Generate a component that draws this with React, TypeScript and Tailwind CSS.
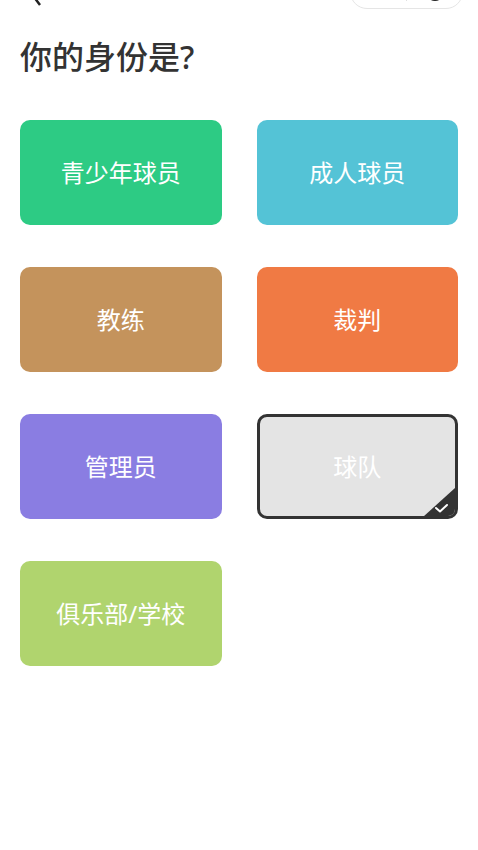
import React from "react";

type Role = { name: string; color: string; selected?: boolean };

const roles: Role[] = [
  { name: "青少年球员", color: "bg-[#2dcb84]" },
  { name: "成人球员", color: "bg-[#54c3d6]" },
  { name: "教练", color: "bg-[#c4935c]" },
  { name: "裁判", color: "bg-[#f07a44]" },
  { name: "管理员", color: "bg-[#8a7de2]" },
  { name: "球队", color: "bg-[#e4e4e4]", selected: true },
  { name: "俱乐部/学校", color: "bg-[#b0d46e]" },
];

function RoleCard({ role }: { role: Role }) {
  return (
    <div
      className={`relative h-[105px] rounded-[10px] overflow-hidden flex items-center justify-center ${role.color} ${
        role.selected ? "border-[3px] border-[#333333]" : ""
      }`}
    >
      <span className="text-white text-[24px]">{role.name}</span>
      {role.selected && (
        <svg className="absolute -right-px -bottom-px" width="33" height="30" viewBox="0 0 33 30">
          <polygon points="33,0 33,30 0,30" fill="#333333" />
          <path d="M13 21 L17 24.5 L24 18" stroke="#ffffff" strokeWidth="2" fill="none" strokeLinecap="round" strokeLinejoin="round" />
        </svg>
      )}
    </div>
  );
}

export default function App() {
  return (
    <div
      className="w-full min-h-[850px] bg-white px-5 overflow-hidden"
      style={{ fontFamily: '"Noto Sans", "Noto Sans CJK SC", sans-serif' }}
    >
      {/* 顶部导航 (被截掉的部分) */}
      <div className="flex items-end justify-between h-[34px] -mt-[25px]">
        <svg width="20" height="34" viewBox="0 0 20 34" className="ml-[6px]">
          <path d="M14 14 L8 22 L14 30" stroke="#222" strokeWidth="2.5" fill="none" />
        </svg>
        <div className="flex items-center h-[34px] w-[113px] rounded-full border border-[#e5e5e5] bg-white -mr-[5px]">
          <div className="flex-1 flex justify-center gap-[3px]">
            <span className="w-[5px] h-[5px] rounded-full bg-[#222]" />
            <span className="w-[7px] h-[7px] rounded-full bg-[#222]" />
            <span className="w-[5px] h-[5px] rounded-full bg-[#222]" />
          </div>
          <div className="w-px h-[18px] bg-[#e0e0e0]" />
          <div className="flex-1 flex justify-center">
            <span className="w-[18px] h-[18px] rounded-full border-[3px] border-[#222]" />
          </div>
        </div>
      </div>

      <h1 className="mt-[27px] text-[32px] leading-[42px] font-medium text-[#333333]">你的身份是?</h1>

      <div className="mt-[42px] grid grid-cols-2 gap-x-[35px] gap-y-[42px]">
        {roles.map((r) => (
          <RoleCard key={r.name} role={r} />
        ))}
      </div>
    </div>
  );
}
